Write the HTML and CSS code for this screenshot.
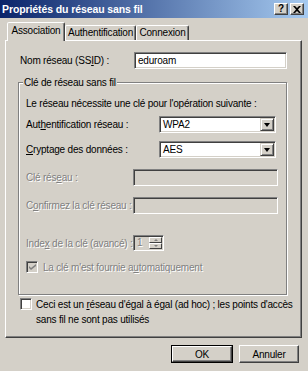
FILE: index.html
```html
<!DOCTYPE html>
<html lang="fr">
<head>
    <meta charset="UTF-8">
    <meta name="viewport" content="width=device-width, initial-scale=1.0">
    <title>Propriétés du réseau sans fil</title>
    <link rel="stylesheet" href="styles.css">
</head>
<body>
    <div class="window">
        <div class="titlebar">
            <span class="title">Propriétés du réseau sans fil</span>
            <div class="caption-btns">
                <span class="cbtn">?</span>
                <span class="cbtn">
                    <svg width="8" height="7" viewBox="0 0 8 7"><path d="M0 0h2l2 2 2-2h2L5 3.5 8 7H6L4 5 2 7H0l3-3.5z" fill="#000"/></svg>
                </span>
            </div>
        </div>
        <div class="client">
            <div class="tabs">
                <span class="tab active t1">Association</span>
                <span class="tab t2">Authentification</span>
                <span class="tab t3">Connexion</span>
            </div>
            <div class="panel">
                <div class="row ssid">
                    <label class="lbl lbl-ssid">Nom réseau (SS<u>I</u>D) :</label>
                    <div class="edit">eduroam</div>
                </div>

                <fieldset class="group">
                    <legend>Clé de réseau sans fil</legend>
                    <p class="intro">Le réseau nécessite une clé pour l'opération suivante :</p>

                    <div class="row r-auth">
                        <label class="lbl lbl-wide">Aut<u>h</u>entification réseau :</label>
                        <div class="combo"><span>WPA2</span><span class="drop"><i></i></span></div>
                    </div>
                    <div class="row r-crypt">
                        <label class="lbl lbl-wide"><u>C</u>ryptage des données :</label>
                        <div class="combo"><span>AES</span><span class="drop"><i></i></span></div>
                    </div>
                    <div class="row r-key">
                        <label class="lbl lbl-narrow off">Clé rés<u>e</u>au :</label>
                        <div class="edit disabled wide"></div>
                    </div>
                    <div class="row r-conf">
                        <label class="lbl lbl-narrow off">C<u>o</u>nfirmez la clé réseau :</label>
                        <div class="edit disabled wide"></div>
                    </div>
                    <div class="row r-index">
                        <label class="lbl lbl-narrow off">Inde<u>x</u> de la clé (avancé) :</label>
                        <div class="spin">
                            <span class="spin-val">1</span>
                            <span class="spin-btns">
                                <span class="sb"><i class="up"></i></span>
                                <span class="sb"><i class="down"></i></span>
                            </span>
                        </div>
                    </div>
                    <div class="row r-auto">
                        <span class="check gray">
                            <svg width="7" height="7" viewBox="0 0 7 7"><path d="M0 2v2l2 2 5-4V0L2 4z" fill="#808080"/></svg>
                        </span>
                        <span class="off">La clé m'est fournie a<u>u</u>tomatiquement</span>
                    </div>
                </fieldset>

                <div class="adhoc">
                    <span class="check"></span>
                    <span class="adhoc-txt">Ceci est un <u>r</u>éseau d'égal à égal (ad hoc) ; les points d'accès sans fil ne sont pas utilisés</span>
                </div>
            </div>
            <div class="buttons">
                <span class="default"><button class="btn">OK</button></span>
                <button class="btn">Annuler</button>
            </div>
        </div>
    </div>
</body>
</html>
```

FILE: styles.css
```css
* {
    box-sizing: border-box;
}
body {
    margin: 0;
    background: #d4d0c8;
    font-family: "Liberation Sans", Arial, sans-serif;
    font-size: 10px;
    letter-spacing: -0.2px;
    color: #000;
}
u {
    text-decoration-thickness: 1px;
    text-underline-offset: 1px;
}
.window {
    width: 308px;
    height: 371px;
    display: flex;
    flex-direction: column;
}

/* title bar */
.titlebar {
    height: 18px;
    background: linear-gradient(to right, #0a246a, #a6caf0);
    display: flex;
    align-items: center;
    justify-content: space-between;
    padding: 0 4px 0 2px;
}
.title {
    color: #fff;
    font-weight: bold;
    font-size: 10.5px;
    letter-spacing: -0.1px;
}
.caption-btns {
    display: flex;
    gap: 2px;
}
.cbtn {
    width: 14px;
    height: 12px;
    background: #d4d0c8;
    border: 1px solid;
    border-color: #fff #404040 #404040 #fff;
    box-shadow: inset -1px -1px #808080;
    font-weight: bold;
    font-size: 10px;
    line-height: 10px;
    display: flex;
    align-items: center;
    justify-content: center;
}

/* tabs */
.client {
    flex: 1;
    display: flex;
    flex-direction: column;
    padding: 3px 6px 0 5px;
}
.tabs {
    display: flex;
    align-items: flex-end;
    height: 19px;
    padding-left: 2px;
    position: relative;
    z-index: 1;
}
.tab {
    height: 15px;
    border: 1px solid;
    border-bottom: none;
    border-color: #fff #404040 transparent #fff;
    box-shadow: inset -1px 0 #808080;
    border-radius: 2px 2px 0 0;
    text-align: center;
    line-height: 13px;
}
.tab.active {
    height: 19px;
    margin-bottom: -1px;
    background: #d4d0c8;
    line-height: 16px;
}
.t1 { width: 58px; }
.t2 { width: 71px; }
.t3 { width: 53px; }
.panel {
    height: 298px;
    border: 1px solid;
    border-color: #fff #404040 #404040 #fff;
    box-shadow: inset -1px -1px #808080;
    padding: 11px 0 0 13px;
}

/* rows */
.row {
    display: flex;
    align-items: center;
}
.lbl {
    flex: none;
}
.lbl-ssid {
    width: 115px;
    padding-left: 1px;
}
.lbl-wide { width: 133px; }
.lbl-narrow { width: 107px; }
.off {
    color: #808080;
    text-shadow: 1px 1px #fff;
}
.edit {
    width: 153px;
    height: 17px;
    background: #fff;
    border: 1px solid;
    border-color: #808080 #fff #fff #808080;
    box-shadow: inset 1px 1px #404040, inset -1px -1px #d4d0c8;
    padding: 1px 3px;
    line-height: 13px;
}
.edit.disabled {
    background: #d4d0c8;
}
.edit.wide {
    width: 145px;
}

/* group */
.group {
    margin: 7px 0 0 -1px;
    width: 269px;
    height: 219px;
    border: 1px solid #808080;
    box-shadow: 1px 1px #fff, inset 1px 1px #fff;
    padding: 8px 0 0 7px;
    min-width: 0;
}
.group legend {
    padding: 0 1px;
    margin-left: -3px;
    background: #d4d0c8;
    line-height: 13px;
}
.intro {
    margin: 0;
    line-height: 13px;
}
.r-auth { margin-top: 6px; }
.r-crypt { margin-top: 8px; }
.r-key { margin-top: 11px; }
.r-conf { margin-top: 11px; }
.r-index { margin-top: 21px; }
.r-auto { margin-top: 10px; gap: 5px; }

.combo {
    width: 117px;
    height: 17px;
    background: #fff;
    border: 1px solid;
    border-color: #808080 #fff #fff #808080;
    box-shadow: inset 1px 1px #404040, inset -1px -1px #d4d0c8;
    padding: 1px 1px 1px 3px;
    display: flex;
    justify-content: space-between;
    line-height: 13px;
}
.drop {
    width: 14px;
    height: 13px;
    background: #d4d0c8;
    border: 1px solid;
    border-color: #d4d0c8 #404040 #404040 #d4d0c8;
    box-shadow: inset 1px 1px #fff, inset -1px -1px #808080;
    display: flex;
    align-items: center;
    justify-content: center;
}
.drop i {
    border-left: 3.5px solid transparent;
    border-right: 3.5px solid transparent;
    border-top: 4px solid #000;
}

.spin {
    width: 31px;
    height: 16px;
    background: #d4d0c8;
    border: 1px solid;
    border-color: #808080 #fff #fff #808080;
    box-shadow: inset 1px 1px #404040;
    display: flex;
    justify-content: space-between;
    padding: 1px;
}
.spin-val {
    color: #808080;
    text-shadow: 1px 1px #fff;
    padding-left: 2px;
    line-height: 12px;
}
.spin-btns {
    display: flex;
    flex-direction: column;
    width: 13px;
}
.sb {
    flex: 1;
    background: #d4d0c8;
    border: 1px solid;
    border-color: #fff #404040 #404040 #fff;
    display: flex;
    align-items: center;
    justify-content: center;
}
.sb i {
    border-left: 2px solid transparent;
    border-right: 2px solid transparent;
}
.sb .up { border-bottom: 2px solid #808080; }
.sb .down { border-top: 2px solid #808080; }

.check {
    flex: none;
    width: 12px;
    height: 12px;
    background: #fff;
    border: 1px solid;
    border-color: #808080 #fff #fff #808080;
    box-shadow: inset 1px 1px #404040, inset -1px -1px #d4d0c8;
    display: flex;
    align-items: center;
    justify-content: center;
}
.check.gray {
    background: #d4d0c8;
}

.adhoc {
    display: flex;
    gap: 4px;
    margin-top: 2px;
    padding-left: 1px;
}
.adhoc .check {
    margin-top: 1px;
}
.adhoc-txt {
    width: 264px;
    line-height: 15px;
}

/* buttons */
.buttons {
    display: flex;
    justify-content: flex-end;
    align-items: center;
    gap: 6px;
    margin-top: 7px;
    padding-right: 3px;
}
.btn {
    width: 60px;
    height: 18px;
    background: #d4d0c8;
    border: 1px solid;
    border-color: #fff #404040 #404040 #fff;
    box-shadow: inset -1px -1px #808080;
    font-family: inherit;
    font-size: 10px;
    letter-spacing: -0.2px;
    padding: 0;
    color: #000;
}
.default {
    border: 1px solid #000;
    display: flex;
}
.default .btn {
    height: 16px;
}
```
